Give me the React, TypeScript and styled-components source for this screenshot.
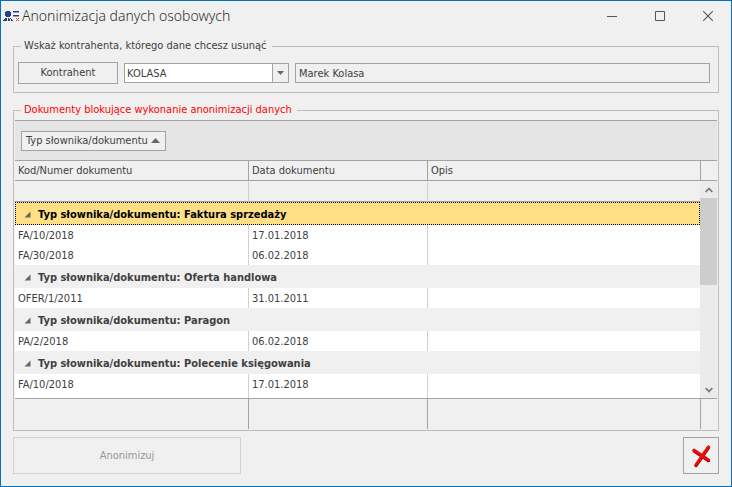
import React from "react";
import styled, { createGlobalStyle } from "styled-components";

const line = "#a3a3a3";
const softLine = "#bebebe";
const face = "#f0f0f0";
const ink = "#404040";

const GlobalStyle = createGlobalStyle`
  *, *::before, *::after { box-sizing: border-box; }
  body { margin: 0; background: ${face}; }
  body, button, input { font: 11px/14px "DejaVu Sans Condensed", "Noto Sans", sans-serif; color: ${ink}; }
`;

const Window = styled.main`
  display: flex;
  flex-direction: column;
  min-height: 100vh;
  padding: 0 12px 12px;
  border: 1px solid #0072c6;
  background: ${face};
`;

const TitleBar = styled.header`
  display: flex;
  align-items: center;
  height: 30px;
  margin: 0 -12px 8px;
  padding-left: 2px;
`;

const Title = styled.h1`
  flex: 1;
  margin: 0 0 0 2px;
  font: 300 14px/20px "Noto Sans", sans-serif;
  color: #303030;
`;

const CaptionButton = styled.button`
  display: grid;
  place-items: center;
  width: 48px;
  height: 28px;
  padding: 0;
  border: 0;
  background: transparent;
`;

const CaptionButtons = styled.div`
  display: flex;
  margin-right: -1px;
`;

const Group = styled.fieldset<{ $dense?: boolean }>`
  display: flex;
  flex-direction: ${(p) => (p.$dense ? "column" : "row")};
  min-width: 0;
  margin: 0 0 ${(p) => (p.$dense ? "6px" : "10px")};
  padding: ${(p) => (p.$dense ? "2px 1px 1px" : "8px 8px 8px 4px")};
  border: 1px solid ${softLine};
`;

const Legend = styled.legend<{ $alert?: boolean }>`
  height: 15px;
  margin-left: ${(p) => (p.$alert ? "6px" : "3px")};
  padding: 0 5px 0 3px;
  color: ${(p) => (p.$alert ? "#ff0000" : ink)};
`;

const PushButton = styled.button`
  width: 100px;
  height: 22px;
  padding: 0;
  border: 1px solid ${line};
  background: ${face};
`;

const Combo = styled.div`
  display: flex;
  width: 165px;
  height: 20px;
  margin: 1px 6px 0;
  border: 1px solid ${line};
  background: #fff;
`;

const ComboInput = styled.input`
  flex: 1;
  min-width: 0;
  padding: 1px 2px 0;
  border: 0;
  background: transparent;
`;

const ComboArrow = styled.button`
  display: grid;
  place-items: center;
  width: 16px;
  padding: 0;
  border: 0;
  border-left: 1px solid ${line};
  background: ${face};
`;

const NameField = styled.input`
  flex: 1;
  min-width: 0;
  height: 20px;
  margin-top: 1px;
  padding: 0 3px;
  border: 1px solid ${line};
  background: ${face};
`;

const GroupPanel = styled.div`
  display: flex;
  align-items: center;
  height: 41px;
  padding-left: 6px;
  border: solid ${line};
  border-width: 1px 0;
  background: #e5e5e5;
`;

const GroupChip = styled.button`
  display: flex;
  align-items: center;
  justify-content: space-between;
  width: 145px;
  height: 20px;
  padding: 0 5px 0 4px;
  border: 1px solid ${line};
  background: ${face};
  white-space: nowrap;
`;

const GridBody = styled.div`
  display: flex;
`;

const Table = styled.table`
  flex: 1;
  min-width: 0;
  table-layout: fixed;
  border-collapse: separate;
  border-spacing: 0;
`;

const Col = styled.col<{ $width?: number }>`
  width: ${(p) => (p.$width ? p.$width + "px" : "auto")};
`;

const HeadCell = styled.th`
  height: 20px;
  padding: 0 4px 0 3px;
  border: solid ${line};
  border-width: 0 1px 1px 0;
  font-weight: normal;
  text-align: left;
  &:last-child { border-right: 0; }
`;

const FilterCell = styled.td`
  height: 21px;
  padding: 0;
  border: solid ${line};
  border-width: 0 1px 1px 0;
  border-right-color: #d0d0d0;
  &:last-child { border-right: 0; }
`;

const GroupCell = styled.td<{ $selected?: boolean }>`
  height: 23px;
  padding: 0 8px;
  border: 1px ${(p) => (p.$selected ? "dotted #000" : "solid " + face)};
  background: ${(p) => (p.$selected ? "#ffe084" : face)};
  color: ${(p) => (p.$selected ? "#000" : ink)};
  font-weight: bold;
`;

const GroupLabel = styled.div`
  display: flex;
  align-items: center;
  gap: 7px;
  padding-top: 2px;
`;

const DataCell = styled.td<{ $last?: boolean }>`
  height: ${(p) => (p.$last ? "24px" : "20px")};
  padding: ${(p) => (p.$last ? "2px 3px 4px" : "2px 3px 0")};
  border-right: 1px solid #d0d0d0;
  background: #fff;
  &:last-child { border-right: 0; }
`;

const FootCell = styled.td`
  height: 31px;
  padding: 0;
  border: solid ${line};
  border-width: 1px 1px 0 0;
  &:last-child { border-right: 0; }
`;

const SideColumn = styled.div`
  display: flex;
  flex-direction: column;
  width: 17px;
`;

const Corner = styled.div<{ $foot?: boolean }>`
  height: ${(p) => (p.$foot ? "31px" : "20px")};
  border: solid ${line};
  border-width: ${(p) => (p.$foot ? "1px 0 0 1px" : "0 0 1px 1px")};
`;

const ScrollTrack = styled.div`
  display: flex;
  flex: 1;
  flex-direction: column;
  background: #ebebeb;
`;

const ScrollButton = styled.button`
  display: grid;
  place-items: center;
  height: 17px;
  padding: 0;
  border: 0;
  background: transparent;
`;

const ScrollSpace = styled.div`
  flex: 1;
`;

const ScrollThumb = styled.div`
  height: 40%;
  background: #cdcdcd;
`;

const Footer = styled.footer`
  display: flex;
  justify-content: space-between;
`;

const ActionButton = styled.button`
  width: 228px;
  height: 37px;
  padding: 0;
  border: 1px solid #d2d2d2;
  background: ${face};
  color: #969696;
`;

const CancelButton = styled.button`
  display: grid;
  place-items: center;
  width: 36px;
  height: 37px;
  padding: 0;
  border: 1px solid ${line};
  background: ${face};
`;

const AppIcon = () => (
  <svg width="17" height="11" viewBox="0 0 17 11" shapeRendering="crispEdges" aria-hidden="true">
    <path fill="#28407f" d="M3 0h4v1h1v4h-1v1h-4v-1h-1v-4h1z" />
    <path fill="#28407f" d="M1 8h1v-1h2v3h-4v-1h1zM5 7h1v1h1v2h-2zM7 7h1v1h1v1h1v1h-2v-2h-1z" />
    <path fill="#28407f" d="M10 0h6v1h-6zM10 4h6v1h-6z" />
    <path fill="#8f9dbf" d="M10 1h6v1h-6zM10 5h6v1h-6z" />
    <path fill="#e04848" d="M13 7h1v1h-1zM15 7h1v1h-1zM14 8h1v1h-1zM13 9h1v1h-1zM15 9h1v1h-1z" />
  </svg>
);

const Expander = () => (
  <svg width="7" height="7" viewBox="0 0 7 7" aria-hidden="true">
    <path d="M6.5 0.5v6h-6z" fill="#666" />
  </svg>
);

const CrossIcon = () => (
  <svg width="20" height="24" viewBox="0 0 20 24" fill="none" strokeLinecap="round" aria-hidden="true">
    <path d="M3 6.8L17.5 16.5M17.5 3.5L5 21.5" stroke="#8d0808" strokeWidth="3.4" />
    <path d="M3 6L17.5 15.8M17.5 2.8L5 20.8" stroke="#f20d0d" strokeWidth="2.8" />
  </svg>
);

type DocumentGroup = { name: string; rows: [string, string][] };

const groups: DocumentGroup[] = [
  { name: "Faktura sprzedaży", rows: [["FA/10/2018", "17.01.2018"], ["FA/30/2018", "06.02.2018"]] },
  { name: "Oferta handlowa", rows: [["OFER/1/2011", "31.01.2011"]] },
  { name: "Paragon", rows: [["PA/2/2018", "06.02.2018"]] },
  { name: "Polecenie księgowania", rows: [["FA/10/2018", "17.01.2018"]] },
];

export default function App() {
  return (
    <>
      <GlobalStyle />
      <Window>
        <TitleBar>
          <AppIcon />
          <Title>Anonimizacja danych osobowych</Title>
          <CaptionButtons>
            <CaptionButton aria-label="Minimalizuj">
              <svg width="10" height="10" shapeRendering="crispEdges"><path d="M0 5h10v1h-10z" fill="#555" /></svg>
            </CaptionButton>
            <CaptionButton aria-label="Maksymalizuj">
              <svg width="10" height="10"><path d="M.5 .5h9v9h-9z" fill="none" stroke="#555" /></svg>
            </CaptionButton>
            <CaptionButton aria-label="Zamknij">
              <svg width="10" height="10"><path d="M0 0l10 10M10 0L0 10" stroke="#555" strokeWidth="1.1" /></svg>
            </CaptionButton>
          </CaptionButtons>
        </TitleBar>

        <Group>
          <Legend>Wskaż kontrahenta, którego dane chcesz usunąć</Legend>
          <PushButton type="button">Kontrahent</PushButton>
          <Combo>
            <ComboInput aria-label="Kod kontrahenta" defaultValue="KOLASA" />
            <ComboArrow type="button" aria-label="Rozwiń">
              <svg width="7" height="4"><path d="M0 0h7L3.5 4z" fill="#666" /></svg>
            </ComboArrow>
          </Combo>
          <NameField aria-label="Nazwa kontrahenta" readOnly value="Marek Kolasa" />
        </Group>

        <Group $dense>
          <Legend $alert>Dokumenty blokujące wykonanie anonimizacji danych</Legend>
          <GroupPanel>
            <GroupChip type="button">
              Typ słownika/dokumentu
              <svg width="9" height="5"><path d="M0 5h9L4.5 0z" fill="#666" /></svg>
            </GroupChip>
          </GroupPanel>
          <GridBody>
            <Table>
              <colgroup>
                <Col $width={234} />
                <Col $width={179} />
                <Col />
              </colgroup>
              <thead>
                <tr>
                  <HeadCell>Kod/Numer dokumentu</HeadCell>
                  <HeadCell>Data dokumentu</HeadCell>
                  <HeadCell>Opis</HeadCell>
                </tr>
              </thead>
              <tbody>
                <tr>
                  <FilterCell />
                  <FilterCell />
                  <FilterCell />
                </tr>
                {groups.map((group, g) => (
                  <React.Fragment key={group.name}>
                    <tr>
                      <GroupCell colSpan={3} $selected={g === 0}>
                        <GroupLabel>
                          <Expander />
                          Typ słownika/dokumentu: {group.name}
                        </GroupLabel>
                      </GroupCell>
                    </tr>
                    {group.rows.map(([code, date]) => {
                      const last = g === groups.length - 1;
                      return (
                        <tr key={code}>
                          <DataCell $last={last}>{code}</DataCell>
                          <DataCell $last={last}>{date}</DataCell>
                          <DataCell $last={last} />
                        </tr>
                      );
                    })}
                  </React.Fragment>
                ))}
              </tbody>
              <tfoot>
                <tr>
                  <FootCell />
                  <FootCell />
                  <FootCell />
                </tr>
              </tfoot>
            </Table>
            <SideColumn>
              <Corner />
              <ScrollTrack>
                <ScrollButton type="button" aria-label="W górę">
                  <svg width="8" height="6"><path d="M.7 5L4 1.5L7.3 5" fill="none" stroke="#777" strokeWidth="1.8" /></svg>
                </ScrollButton>
                <ScrollThumb />
                <ScrollSpace />
                <ScrollButton type="button" aria-label="W dół">
                  <svg width="8" height="6"><path d="M.7 1L4 4.5L7.3 1" fill="none" stroke="#777" strokeWidth="1.8" /></svg>
                </ScrollButton>
              </ScrollTrack>
              <Corner $foot />
            </SideColumn>
          </GridBody>
        </Group>

        <Footer>
          <ActionButton type="button" disabled>Anonimizuj</ActionButton>
          <CancelButton type="button" aria-label="Anuluj">
            <CrossIcon />
          </CancelButton>
        </Footer>
      </Window>
    </>
  );
}
